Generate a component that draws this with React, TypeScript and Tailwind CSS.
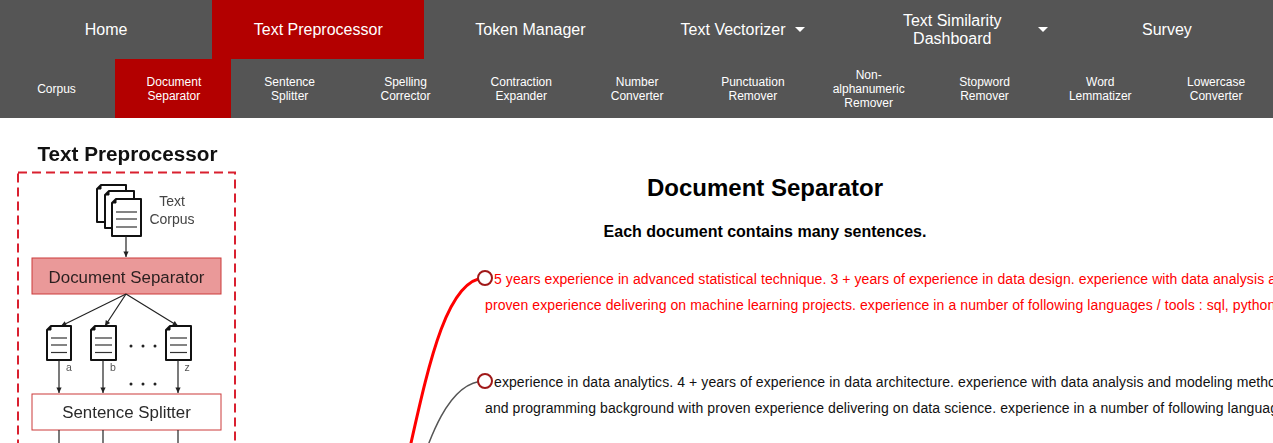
const topItems = ["Home", "Text Preprocessor", "Token Manager", "Text Vectorizer", "Text Similarity Dashboard", "Survey"];

const subItems = [
  "Corpus",
  "Document Separator",
  "Sentence Splitter",
  "Spelling Corrector",
  "Contraction Expander",
  "Number Converter",
  "Punctuation Remover",
  "Non-alphanumeric Remover",
  "Stopword Remover",
  "Word Lemmatizer",
  "Lowercase Converter",
];

function Caret({ className }: { className: string }) {
  return <span className={`h-0 w-0 shrink-0 border-x-[5px] border-t-[5px] border-x-transparent border-t-white ${className}`} />;
}

function TopNav() {
  return (
    <nav className="grid h-[59px] grid-cols-6 bg-[#555555] text-[16px] text-white">
      {topItems.map((label) => {
        if (label === "Text Similarity Dashboard") {
          return (
            <a key={label} className="flex items-center pr-[13px] pl-[17px] text-center leading-[18px]">
              <span className="flex-1 px-[30px]">{label}</span>
              <Caret className="-ml-[1px]" />
            </a>
          );
        }
        return (
          <a
            key={label}
            className={`flex items-center justify-center px-4 text-center leading-[18px] ${label === "Text Preprocessor" ? "bg-[#b30000]" : ""}`}
          >
            <span>{label}</span>
            {label === "Text Vectorizer" && <Caret className="ml-[9px]" />}
          </a>
        );
      })}
    </nav>
  );
}

function SubNav() {
  return (
    <nav className="flex h-[59px] bg-[#555555] text-[12px] text-white">
      {subItems.map((label) => (
        <a
          key={label}
          className={`flex items-center justify-center text-center leading-[14px] ${label === "Corpus" ? "w-[115px] shrink-0 pr-[21px] pl-[19px]" : "flex-1 pr-[19px] pl-[21px]"} ${label === "Document Separator" ? "bg-[#b30000]" : ""}`}
        >
          {label}
        </a>
      ))}
    </nav>
  );
}

// 문서 아이콘
function Doc({ x, y, w, h, lines }: { x: number; y: number; w: number; h: number; lines: number[] }) {
  return (
    <g>
      <path
        d={`M${x + 4} ${y}H${x + w}V${y + h}H${x}V${y + 4}Z`}
        fill="white"
        stroke="#111"
        strokeWidth="2"
        strokeLinejoin="round"
      />
      <path d={`M${x} ${y + 4}L${x + 4} ${y}V${y + 4}Z`} fill="#111" stroke="#111" />
      {lines.map((ly) => (
        <line key={ly} x1={x + 4} x2={x + w - 4} y1={ly} y2={ly} stroke="#333" strokeWidth="1.2" />
      ))}
    </g>
  );
}

function Arrow({ x1, y1, x2, y2 }: { x1: number; y1: number; x2: number; y2: number }) {
  const a = Math.atan2(y2 - y1, x2 - x1);
  const s = 6;
  const p1 = `${x2 - s * Math.cos(a - 0.45)} ${y2 - s * Math.sin(a - 0.45)}`;
  const p2 = `${x2 - s * Math.cos(a + 0.45)} ${y2 - s * Math.sin(a + 0.45)}`;
  return (
    <g>
      <line x1={x1} y1={y1} x2={x2} y2={y2} stroke="#222" strokeWidth="1.2" />
      <path d={`M${x2} ${y2}L${p1}L${p2}Z`} fill="#222" />
    </g>
  );
}

function Diagram() {
  return (
    <svg width="257" height="325" viewBox="0 118 257 325" className="block blur-[0.35px]">
      <text x="127.5" y="161" textAnchor="middle" fontSize="20.7" fontWeight="700" fill="#111">Text Preprocessor</text>
      <rect x="18" y="172.5" width="217" height="320" fill="none" stroke="#d9202f" strokeWidth="2" strokeDasharray="9 5" />
      <Doc x={97} y={185} w={29} h={37} lines={[]} />
      <Doc x={105} y={191} w={29} h={37} lines={[]} />
      <Doc x={112} y={199} w={29} h={37} lines={[212, 219, 227]} />
      <text x="172" y="206" textAnchor="middle" fontSize="14" fill="#444">Text</text>
      <text x="172" y="224" textAnchor="middle" fontSize="14" fill="#444">Corpus</text>
      <Arrow x1={126} y1={236} x2={126} y2={257} />
      <rect x="32" y="258" width="189" height="36" fill="#ea9999" stroke="#cc3a3a" strokeWidth="1" />
      <text x="126.5" y="282.5" textAnchor="middle" fontSize="16.9" fill="#2a1f1f">Document Separator</text>
      <Arrow x1={126} y1={294} x2={61} y2={326} />
      <Arrow x1={126} y1={294} x2={105} y2={326} />
      <Arrow x1={126} y1={294} x2={178} y2={326} />
      <Doc x={47} y={326} w={24} h={34} lines={[338, 345, 352.5]} />
      <Doc x={91} y={326} w={25} h={34} lines={[338, 345, 352.5]} />
      <Doc x={166} y={326} w={25} h={34} lines={[338, 345, 352.5]} />
      <text x="69" y="371" textAnchor="middle" fontSize="10.5" fill="#555">a</text>
      <text x="113" y="371" textAnchor="middle" fontSize="10.5" fill="#555">b</text>
      <text x="187" y="371" textAnchor="middle" fontSize="10.5" fill="#555">z</text>
      <g fill="#222">
        {[131, 143, 155].map((x) => (
          <g key={x}>
            <circle cx={x} cy={346} r="1.5" />
            <circle cx={x} cy={384} r="1.5" />
          </g>
        ))}
      </g>
      <Arrow x1={59} y1={360} x2={59} y2={393} />
      <Arrow x1={103} y1={360} x2={103} y2={393} />
      <Arrow x1={178} y1={360} x2={178} y2={393} />
      <rect x="32" y="394" width="189" height="36" fill="white" stroke="#cc3a3a" strokeWidth="1" />
      <text x="126.5" y="418" textAnchor="middle" fontSize="16.9" fill="#2a2a2a">Sentence Splitter</text>
      <g stroke="#222" strokeWidth="1.2">
        <line x1={59} x2={59} y1={430} y2={443} />
        <line x1={103} x2={103} y1={430} y2={443} />
        <line x1={178} x2={178} y1={430} y2={443} />
      </g>
    </svg>
  );
}

function TreeNode({ top, color, first, second }: { top: number; color: string; first: string; second: string }) {
  return (
    <>
      <span className="absolute left-[220px] h-4 w-4 rounded-full border-2 border-[#a01818] bg-white" style={{ top: top - 8 }} />
      <div className={`absolute left-[228px] whitespace-nowrap text-[14px] leading-[26px] tracking-[0.09px] ${color}`} style={{ top: top - 12 }}>
        <div className="indent-[9px]">{first}</div>
        <div>{second}</div>
      </div>
    </>
  );
}

function Tree() {
  return (
    <div className="relative mt-[15px] min-h-0 flex-1 overflow-hidden">
      <svg className="absolute inset-0" width="1016" height="187" viewBox="257 256 1016 187" fill="none">
        <path d="M337 608C411 608 411 278 485 278" stroke="#ff0000" strokeWidth="3" />
        <path d="M337 608C411 608 411 381 485 381" stroke="#555555" strokeWidth="1.5" />
      </svg>
      <TreeNode
        top={22}
        color="text-[#ff0000]"
        first="5 years experience in advanced statistical technique. 3 + years of experience in data design. experience with data analysis and modeling methods."
        second="proven experience delivering on machine learning projects. experience in a number of following languages / tools : sql, python, r, java."
      />
      <TreeNode
        top={125}
        color="text-[#111111]"
        first="experience in data analytics. 4 + years of experience in data architecture. experience with data analysis and modeling methods in industry."
        second="and programming background with proven experience delivering on data science. experience in a number of following languages / tools."
      />
    </div>
  );
}

export default function App() {
  return (
    <div className="flex h-screen flex-col overflow-hidden bg-white font-['Liberation_Sans',Arial,sans-serif]">
      <TopNav />
      <SubNav />
      <main className="flex min-h-0 flex-1">
        <aside className="w-[257px] shrink-0">
          <Diagram />
        </aside>
        <section className="flex min-w-0 flex-1 flex-col">
          <h1 className="mt-[56px] text-center text-[24px] leading-[28px] font-bold text-black">Document Separator</h1>
          <p className="mt-[21px] text-center text-[16px] leading-[18px] font-bold text-black">Each document contains many sentences.</p>
          <Tree />
        </section>
      </main>
    </div>
  );
}
